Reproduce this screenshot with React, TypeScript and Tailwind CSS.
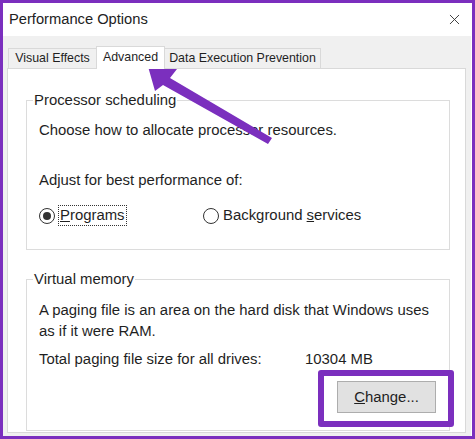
import { X } from "lucide-react";

const font = "font-['Liberation_Sans',Arial,sans-serif]";

function Radio({ checked }: { checked?: boolean }) {
  return (
    <span className="w-[16px] h-[16px] rounded-full border border-[#333] bg-white flex items-center justify-center shrink-0">
      {checked && <span className="w-[8px] h-[8px] rounded-full bg-[#333]" />}
    </span>
  );
}

export default function App() {
  return (
    <div className={`relative w-[475px] h-[439px] border-[3px] border-[#7b2fbe] bg-white flex flex-col text-[#1f1f1f] ${font}`}>
      {/* Title bar */}
      <div className="h-[33px] flex items-center justify-between pl-[6px] pr-[9px] shrink-0">
        <span className="text-[14.7px] text-[#222]">Performance Options</span>
        <X className="w-[17px] h-[17px] text-[#333]" strokeWidth={1.3} />
      </div>

      {/* Body */}
      <div className="flex-1 bg-[#f0f0f0] flex flex-col pt-[10px] pl-[4px] pr-[5px] pb-[3px] mr-[1px]">
        {/* Tabs */}
        <div className="flex items-end h-[23px] text-[12.4px] whitespace-nowrap pl-[1px] relative z-10">
          <div className="h-[21px] w-[88px] border border-r-0 border-[#d9d9d9] bg-[#f0f0f0] flex items-center justify-center">
            Visual Effects
          </div>
          <div className="h-[23px] w-[69px] border border-b-0 border-[#d9d9d9] bg-white flex items-center justify-center pb-[1px]">
            Advanced
          </div>
          <div className="h-[21px] w-[156px] border border-l-0 border-[#d9d9d9] bg-[#f0f0f0] flex items-center justify-center">
            Data Execution Prevention
          </div>
        </div>

        {/* Panel */}
        <div className="flex-1 -mt-[1px] bg-white border border-[#d9d9d9] flex flex-col pt-[21px] pl-[18px] pr-[15px] pb-[1px] text-[14.9px]">
          <fieldset className="border border-[#dcdcdc] px-[12px] pb-[23px]">
            <legend className="-ml-[6px] px-[1px] leading-[20px]">Processor scheduling</legend>
            <p className="leading-[20px] mt-[10px]">Choose how to allocate processor resources.</p>
            <p className="leading-[20px] mt-[30px]">Adjust for best performance of:</p>
            <div className="flex items-center h-[21px] mt-[15px]">
              <div className="w-[164px] flex items-center">
                <Radio checked />
                <span className="ml-[3px] px-[1px] border border-dotted border-[#333] leading-[19px]">
                  <u>P</u>rograms
                </span>
              </div>
              <Radio />
              <span className="ml-[4px]">
                Background <u>s</u>ervices
              </span>
            </div>
          </fieldset>

          <fieldset className="flex-1 border border-[#dcdcdc] px-[12px] mt-[19px] flex flex-col">
            <legend className="-ml-[6px] px-[1px] leading-[20px]">Virtual memory</legend>
            <p className="leading-[21px] mt-[11px]">
              A paging file is an area on the hard disk that Windows uses
              <br />
              as if it were RAM.
            </p>
            <div className="flex leading-[20px] mt-[7px]">
              <span className="w-[266px]">Total paging file size for all drives:</span>
              <span>10304 MB</span>
            </div>
            <div className="flex justify-end mt-[12px] pr-[1px]">
              <button className="w-[99px] h-[32px] bg-[#e1e1e1] border border-[#adadad] text-[14.9px]">
                <u>C</u>hange...
              </button>
            </div>
          </fieldset>
        </div>
      </div>

      {/* Highlight around Change button */}
      <div className="absolute left-[315px] top-[367px] w-[136px] h-[57px] border-[6px] border-[#7b2fbe] rounded-[3px]" />

      {/* Arrow */}
      <svg className="absolute left-[-3px] top-[-3px]" width="475" height="439" viewBox="0 0 475 439">
        <polygon
          points="147,63 177,69 170,78 272,138 268,144 163,85 155,91"
          fill="#7b2fbe"
        />
      </svg>
    </div>
  );
}
